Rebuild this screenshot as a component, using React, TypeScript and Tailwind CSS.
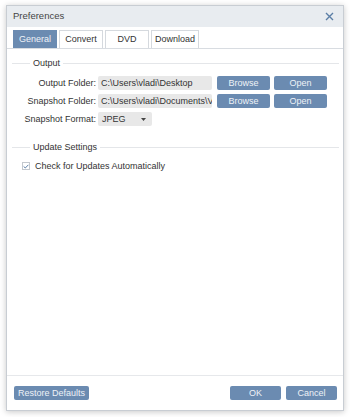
import { useState } from "react";

const font = { fontFamily: '"Liberation Sans", Arial, sans-serif' };

const Btn = ({ label, w }: { label: string; w: string }) => (
  <button
    className={`${w} h-[14px] rounded-[2px] bg-[#6b8bb1] text-[9px] leading-none text-[#eef2f7] flex items-center justify-center`}
  >
    {label}
  </button>
);

const Legend = ({ title }: { title: string }) => (
  <div className="flex items-center h-[12px]">
    <div className="ml-[5px] w-[18px] h-px bg-[#e4e6e9]" />
    <span className="px-[3px] text-[9px] leading-none text-[#333]">{title}</span>
    <div className="flex-1 mr-[4px] h-px bg-[#e4e6e9]" />
  </div>
);

const Row = ({ label, children }: { label: string; children: React.ReactNode }) => (
  <div className="flex items-center h-[14px]">
    <span className="w-[91px] pr-[2px] text-right text-[9px] leading-none text-[#333]">
      {label}
    </span>
    {children}
  </div>
);

export default function App() {
  const [tab, setTab] = useState("General");
  const tabs = [
    { name: "General", w: "w-[44px]" },
    { name: "Convert", w: "w-[44px]" },
    { name: "DVD", w: "w-[44px]" },
    { name: "Download", w: "w-[48px]" },
  ];

  return (
    <div className="w-[350px] h-[417px] bg-white pt-[5px] pl-[6px]" style={font}>
      <div className="w-[338px] h-[406px] border border-[#c8cdd3] bg-white shadow-[0_1px_6px_rgba(0,0,0,0.22)] flex flex-col">
        <div className="h-[21px] bg-[#e8ecf0] flex items-center justify-between pl-[6px] pr-[9px]">
          <span className="text-[9.5px] text-[#444]">Preferences</span>
          <svg width="9" height="9" viewBox="0 0 9 9">
            <path d="M1 1L8 8M8 1L1 8" stroke="#5b7ea6" strokeWidth="1.4" />
          </svg>
        </div>

        <div className="pt-[3px] pl-[6px] flex gap-[2px]">
          {tabs.map((t) => (
            <button
              key={t.name}
              onClick={() => setTab(t.name)}
              className={`${t.w} h-[18px] text-[9px] leading-none flex items-center justify-center ${
                tab === t.name
                  ? "bg-[#6b8bb1] text-[#eef2f7]"
                  : "bg-white text-[#333] border border-b-0 border-[#d5d9de]"
              }`}
            >
              {t.name}
            </button>
          ))}
        </div>

        <div className="flex-1 border-t border-[#d8dce1] flex flex-col">
          <div className="mt-[8px]">
            <Legend title="Output" />
          </div>

          <div className="mt-[7px] flex flex-col gap-[4px]">
            <Row label="Output Folder:">
              <div className="w-[114px] h-[14px] bg-[#e8e8e8] rounded-[2px] px-[3px] text-[9px] leading-[14px] text-[#333] overflow-hidden whitespace-nowrap">
                C:\Users\vladi\Desktop
              </div>
              <div className="ml-[5px] flex gap-[4px]">
                <Btn label="Browse" w="w-[53px]" />
                <Btn label="Open" w="w-[53px]" />
              </div>
            </Row>
            <Row label="Snapshot Folder:">
              <div className="w-[114px] h-[14px] bg-[#e8e8e8] rounded-[2px] px-[3px] text-[9px] leading-[14px] text-[#333] overflow-hidden whitespace-nowrap">
                C:\Users\vladi\Documents\V
              </div>
              <div className="ml-[5px] flex gap-[4px]">
                <Btn label="Browse" w="w-[53px]" />
                <Btn label="Open" w="w-[53px]" />
              </div>
            </Row>
            <Row label="Snapshot Format:">
              <div className="w-[54px] h-[14px] bg-[#e8e8e8] rounded-[2px] pl-[4px] pr-[6px] flex items-center justify-between">
                <span className="text-[9px] leading-none text-[#333]">JPEG</span>
                <svg width="5" height="3" viewBox="0 0 5 3">
                  <path d="M0 0H5L2.5 3Z" fill="#444" />
                </svg>
              </div>
            </Row>
          </div>

          <div className="mt-[15px]">
            <Legend title="Update Settings" />
          </div>

          <div className="mt-[7px] h-[12px] flex items-center pl-[15px] gap-[5px]">
            <div className="w-[8px] h-[8px] border border-[#c3c8ce] bg-white flex items-center justify-center">
              <svg width="6" height="5" viewBox="0 0 6 5">
                <path d="M0.6 2.4L2.3 4L5.4 0.8" stroke="#5b7ea6" strokeWidth="1" fill="none" />
              </svg>
            </div>
            <span className="text-[9px] leading-none text-[#333]">Check for Updates Automatically</span>
          </div>
        </div>

        <div className="border-t border-[#e6e8eb] pt-[10px] pb-[10px] px-[7px] flex items-center">
          <Btn label="Restore Defaults" w="w-[75px]" />
          <div className="ml-auto flex gap-[5px] mr-[-1px]">
            <Btn label="OK" w="w-[51px]" />
            <Btn label="Cancel" w="w-[51px]" />
          </div>
        </div>
      </div>
    </div>
  );
}
